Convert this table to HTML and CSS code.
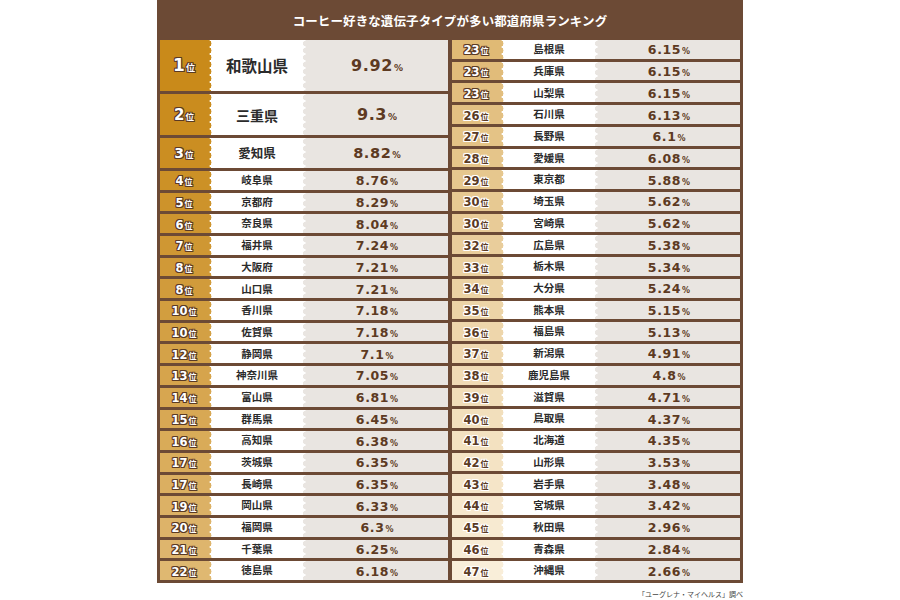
FILE: index.html
```html
<!DOCTYPE html>
<html lang="ja">
<head>
<meta charset="utf-8">
<title>コーヒー好きな遺伝子タイプが多い都道府県ランキング</title>
<link rel="stylesheet" href="styles.css">
</head>
<body>
<div class="page">
  <div class="board">
    <h1 class="title">コーヒー好きな遺伝子タイプが多い都道府県ランキング</h1>
    <div class="cols">
      <div class="col col-left">
        <div class="row r1" style="--c:rgb(201,138,26)"><div class="rank light"><span><b>1</b><small>位</small></span></div><div class="name">和歌山県</div><div class="val"><span><b>9.92</b><small>%</small></span></div></div>
        <div class="row r2" style="--c:rgb(202,140,30)"><div class="rank light"><span><b>2</b><small>位</small></span></div><div class="name">三重県</div><div class="val"><span><b>9.3</b><small>%</small></span></div></div>
        <div class="row r3" style="--c:rgb(203,142,34)"><div class="rank light"><span><b>3</b><small>位</small></span></div><div class="name">愛知県</div><div class="val"><span><b>8.82</b><small>%</small></span></div></div>
        <div class="row" style="--c:rgb(204,145,38)"><div class="rank light"><span><b>4</b><small>位</small></span></div><div class="name">岐阜県</div><div class="val"><span><b>8.76</b><small>%</small></span></div></div>
        <div class="row" style="--c:rgb(205,147,43)"><div class="rank light"><span><b>5</b><small>位</small></span></div><div class="name">京都府</div><div class="val"><span><b>8.29</b><small>%</small></span></div></div>
        <div class="row" style="--c:rgb(206,149,47)"><div class="rank light"><span><b>6</b><small>位</small></span></div><div class="name">奈良県</div><div class="val"><span><b>8.04</b><small>%</small></span></div></div>
        <div class="row" style="--c:rgb(207,151,51)"><div class="rank light"><span><b>7</b><small>位</small></span></div><div class="name">福井県</div><div class="val"><span><b>7.24</b><small>%</small></span></div></div>
        <div class="row" style="--c:rgb(208,153,55)"><div class="rank light"><span><b>8</b><small>位</small></span></div><div class="name">大阪府</div><div class="val"><span><b>7.21</b><small>%</small></span></div></div>
        <div class="row" style="--c:rgb(209,155,59)"><div class="rank light"><span><b>8</b><small>位</small></span></div><div class="name">山口県</div><div class="val"><span><b>7.21</b><small>%</small></span></div></div>
        <div class="row" style="--c:rgb(210,158,63)"><div class="rank light"><span><b>10</b><small>位</small></span></div><div class="name">香川県</div><div class="val"><span><b>7.18</b><small>%</small></span></div></div>
        <div class="row" style="--c:rgb(211,160,68)"><div class="rank light"><span><b>10</b><small>位</small></span></div><div class="name">佐賀県</div><div class="val"><span><b>7.18</b><small>%</small></span></div></div>
        <div class="row" style="--c:rgb(212,162,72)"><div class="rank light"><span><b>12</b><small>位</small></span></div><div class="name">静岡県</div><div class="val"><span><b>7.1</b><small>%</small></span></div></div>
        <div class="row" style="--c:rgb(214,164,76)"><div class="rank light"><span><b>13</b><small>位</small></span></div><div class="name">神奈川県</div><div class="val"><span><b>7.05</b><small>%</small></span></div></div>
        <div class="row" style="--c:rgb(215,166,80)"><div class="rank light"><span><b>14</b><small>位</small></span></div><div class="name">富山県</div><div class="val"><span><b>6.81</b><small>%</small></span></div></div>
        <div class="row" style="--c:rgb(216,168,84)"><div class="rank light"><span><b>15</b><small>位</small></span></div><div class="name">群馬県</div><div class="val"><span><b>6.45</b><small>%</small></span></div></div>
        <div class="row" style="--c:rgb(217,171,88)"><div class="rank light"><span><b>16</b><small>位</small></span></div><div class="name">高知県</div><div class="val"><span><b>6.38</b><small>%</small></span></div></div>
        <div class="row" style="--c:rgb(218,173,92)"><div class="rank light"><span><b>17</b><small>位</small></span></div><div class="name">茨城県</div><div class="val"><span><b>6.35</b><small>%</small></span></div></div>
        <div class="row" style="--c:rgb(219,175,97)"><div class="rank light"><span><b>17</b><small>位</small></span></div><div class="name">長崎県</div><div class="val"><span><b>6.35</b><small>%</small></span></div></div>
        <div class="row" style="--c:rgb(220,177,101)"><div class="rank light"><span><b>19</b><small>位</small></span></div><div class="name">岡山県</div><div class="val"><span><b>6.33</b><small>%</small></span></div></div>
        <div class="row" style="--c:rgb(221,179,105)"><div class="rank light"><span><b>20</b><small>位</small></span></div><div class="name">福岡県</div><div class="val"><span><b>6.3</b><small>%</small></span></div></div>
        <div class="row" style="--c:rgb(222,181,109)"><div class="rank light"><span><b>21</b><small>位</small></span></div><div class="name">千葉県</div><div class="val"><span><b>6.25</b><small>%</small></span></div></div>
        <div class="row" style="--c:rgb(223,184,113)"><div class="rank light"><span><b>22</b><small>位</small></span></div><div class="name">徳島県</div><div class="val"><span><b>6.18</b><small>%</small></span></div></div>
      </div>
      <div class="col col-right">
        <div class="row" style="--c:rgb(224,186,117)"><div class="rank light"><span><b>23</b><small>位</small></span></div><div class="name">島根県</div><div class="val"><span><b>6.15</b><small>%</small></span></div></div>
        <div class="row" style="--c:rgb(225,188,122)"><div class="rank light"><span><b>23</b><small>位</small></span></div><div class="name">兵庫県</div><div class="val"><span><b>6.15</b><small>%</small></span></div></div>
        <div class="row" style="--c:rgb(226,190,126)"><div class="rank light"><span><b>23</b><small>位</small></span></div><div class="name">山梨県</div><div class="val"><span><b>6.15</b><small>%</small></span></div></div>
        <div class="row" style="--c:rgb(227,192,130)"><div class="rank dark"><span><b>26</b><small>位</small></span></div><div class="name">石川県</div><div class="val"><span><b>6.13</b><small>%</small></span></div></div>
        <div class="row" style="--c:rgb(228,195,134)"><div class="rank dark"><span><b>27</b><small>位</small></span></div><div class="name">長野県</div><div class="val"><span><b>6.1</b><small>%</small></span></div></div>
        <div class="row" style="--c:rgb(229,197,138)"><div class="rank dark"><span><b>28</b><small>位</small></span></div><div class="name">愛媛県</div><div class="val"><span><b>6.08</b><small>%</small></span></div></div>
        <div class="row" style="--c:rgb(230,199,142)"><div class="rank dark"><span><b>29</b><small>位</small></span></div><div class="name">東京都</div><div class="val"><span><b>5.88</b><small>%</small></span></div></div>
        <div class="row" style="--c:rgb(231,201,146)"><div class="rank dark"><span><b>30</b><small>位</small></span></div><div class="name">埼玉県</div><div class="val"><span><b>5.62</b><small>%</small></span></div></div>
        <div class="row" style="--c:rgb(232,203,151)"><div class="rank dark"><span><b>30</b><small>位</small></span></div><div class="name">宮崎県</div><div class="val"><span><b>5.62</b><small>%</small></span></div></div>
        <div class="row" style="--c:rgb(233,205,155)"><div class="rank dark"><span><b>32</b><small>位</small></span></div><div class="name">広島県</div><div class="val"><span><b>5.38</b><small>%</small></span></div></div>
        <div class="row" style="--c:rgb(234,208,159)"><div class="rank dark"><span><b>33</b><small>位</small></span></div><div class="name">栃木県</div><div class="val"><span><b>5.34</b><small>%</small></span></div></div>
        <div class="row" style="--c:rgb(235,210,163)"><div class="rank dark"><span><b>34</b><small>位</small></span></div><div class="name">大分県</div><div class="val"><span><b>5.24</b><small>%</small></span></div></div>
        <div class="row" style="--c:rgb(236,212,167)"><div class="rank dark"><span><b>35</b><small>位</small></span></div><div class="name">熊本県</div><div class="val"><span><b>5.15</b><small>%</small></span></div></div>
        <div class="row" style="--c:rgb(238,214,171)"><div class="rank dark"><span><b>36</b><small>位</small></span></div><div class="name">福島県</div><div class="val"><span><b>5.13</b><small>%</small></span></div></div>
        <div class="row" style="--c:rgb(239,216,175)"><div class="rank dark"><span><b>37</b><small>位</small></span></div><div class="name">新潟県</div><div class="val"><span><b>4.91</b><small>%</small></span></div></div>
        <div class="row" style="--c:rgb(240,218,180)"><div class="rank dark"><span><b>38</b><small>位</small></span></div><div class="name">鹿児島県</div><div class="val"><span><b>4.8</b><small>%</small></span></div></div>
        <div class="row" style="--c:rgb(241,221,184)"><div class="rank dark"><span><b>39</b><small>位</small></span></div><div class="name">滋賀県</div><div class="val"><span><b>4.71</b><small>%</small></span></div></div>
        <div class="row" style="--c:rgb(242,223,188)"><div class="rank dark"><span><b>40</b><small>位</small></span></div><div class="name">鳥取県</div><div class="val"><span><b>4.37</b><small>%</small></span></div></div>
        <div class="row" style="--c:rgb(243,225,192)"><div class="rank dark"><span><b>41</b><small>位</small></span></div><div class="name">北海道</div><div class="val"><span><b>4.35</b><small>%</small></span></div></div>
        <div class="row" style="--c:rgb(244,227,196)"><div class="rank dark"><span><b>42</b><small>位</small></span></div><div class="name">山形県</div><div class="val"><span><b>3.53</b><small>%</small></span></div></div>
        <div class="row" style="--c:rgb(245,229,200)"><div class="rank dark"><span><b>43</b><small>位</small></span></div><div class="name">岩手県</div><div class="val"><span><b>3.48</b><small>%</small></span></div></div>
        <div class="row" style="--c:rgb(246,231,205)"><div class="rank dark"><span><b>44</b><small>位</small></span></div><div class="name">宮城県</div><div class="val"><span><b>3.42</b><small>%</small></span></div></div>
        <div class="row" style="--c:rgb(247,234,209)"><div class="rank dark"><span><b>45</b><small>位</small></span></div><div class="name">秋田県</div><div class="val"><span><b>2.96</b><small>%</small></span></div></div>
        <div class="row" style="--c:rgb(248,236,213)"><div class="rank dark"><span><b>46</b><small>位</small></span></div><div class="name">青森県</div><div class="val"><span><b>2.84</b><small>%</small></span></div></div>
        <div class="row" style="--c:rgb(249,238,217)"><div class="rank dark"><span><b>47</b><small>位</small></span></div><div class="name">沖縄県</div><div class="val"><span><b>2.66</b><small>%</small></span></div></div>
      </div>
    </div>
  </div>
  <p class="note">「ユーグレナ・マイヘルス」調べ</p>
</div>
</body>
</html>
```

FILE: styles.css
```css
* { box-sizing: border-box; }

body {
  margin: 0;
  background: #fff;
  font-family: "Noto Sans CJK JP", "Noto Sans", sans-serif;
}

.page {
  width: 586px;
  margin: 0 auto;
}

.board {
  background: #6c4a35;
  padding: 0 3px 3px;
}

.title {
  margin: 0;
  height: 40px;
  display: flex;
  align-items: center;
  justify-content: center;
  color: #fff;
  font-size: 12.5px;
  font-weight: 700;
  letter-spacing: 0.1px;
}

.cols {
  display: grid;
  grid-template-columns: 1fr 1fr;
  column-gap: 4px;
  height: 540px;
}

.col {
  display: grid;
  row-gap: 3px;
}

.col-left {
  grid-template-rows: 51px 41px 30px repeat(19, 1fr);
}

.col-right {
  grid-template-rows: repeat(25, 1fr);
}

.row {
  display: grid;
  grid-template-columns: 48px 98px 1fr;
  min-height: 0;
}

.rank {
  background: var(--c);
  position: relative;
  z-index: 1;
  display: flex;
  align-items: center;
  justify-content: center;
  font-family: "DejaVu Sans", sans-serif;
  font-weight: 700;
  line-height: 1;
}

.rank::after {
  content: "";
  position: absolute;
  top: 0;
  bottom: 0;
  left: 100%;
  width: 5px;
  background: radial-gradient(circle at 0 50%, var(--c) 3.2px, transparent 3.7px) 0 0 / 5px 7px repeat-y;
}

.rank b {
  font-size: 11.5px;
  font-weight: 700;
}

.rank small {
  font-size: 8px;
  font-family: "Noto Sans CJK JP", sans-serif;
  font-weight: 700;
  margin-left: 1px;
}

.rank.light {
  color: #fff;
  text-shadow: 1px 0 0 #5a3a24, -1px 0 0 #5a3a24, 0 1px 0 #5a3a24, 0 -1px 0 #5a3a24,
    1px 1px 0 #5a3a24, -1px -1px 0 #5a3a24, 1px -1px 0 #5a3a24, -1px 1px 0 #5a3a24;
}

.rank.dark {
  color: #5a3a24;
  text-shadow: 1px 0 0 #fff, -1px 0 0 #fff, 0 1px 0 #fff, 0 -1px 0 #fff,
    1px 1px 0 #fff, -1px -1px 0 #fff, 1px -1px 0 #fff, -1px 1px 0 #fff;
}

.name {
  background: #fff;
  display: flex;
  align-items: center;
  justify-content: center;
  font-size: 10.5px;
  font-weight: 700;
  color: #2b2b2b;
  line-height: 1;
}

.val {
  background: #e9e5e1;
  position: relative;
  display: flex;
  align-items: center;
  justify-content: center;
  font-family: "DejaVu Sans", sans-serif;
  font-weight: 700;
  color: #5d3a22;
  line-height: 1;
}

.val::before {
  content: "";
  position: absolute;
  top: 0;
  bottom: 0;
  right: 100%;
  width: 4px;
  background: radial-gradient(circle at 100% 50%, #e9e5e1 2.8px, transparent 3.3px) 0 0 / 4px 7px repeat-y;
}

.val b {
  font-size: 12.5px;
  letter-spacing: 0.6px;
}

.val small {
  font-size: 8px;
  margin-left: 1px;
}

.r1 .rank b { font-size: 17px; }
.r1 .rank small { font-size: 9px; }
.r1 .name { font-size: 15.5px; }
.r1 .val b { font-size: 16px; letter-spacing: 0.6px; }
.r1 .val small { font-size: 9px; }

.r2 .rank b { font-size: 15px; }
.r2 .rank small { font-size: 8.5px; }
.r2 .name { font-size: 14px; }
.r2 .val b { font-size: 16px; letter-spacing: 0.6px; }
.r2 .val small { font-size: 9px; }

.r3 .rank b { font-size: 14px; }
.r3 .rank small { font-size: 8.5px; }
.r3 .name { font-size: 12.5px; }
.r3 .val b { font-size: 14.5px; letter-spacing: 0.6px; }
.r3 .val small { font-size: 8.5px; }

.note {
  margin: 6px 0 0;
  text-align: right;
  font-size: 7px;
  line-height: 10px;
  color: #444;
}
```
